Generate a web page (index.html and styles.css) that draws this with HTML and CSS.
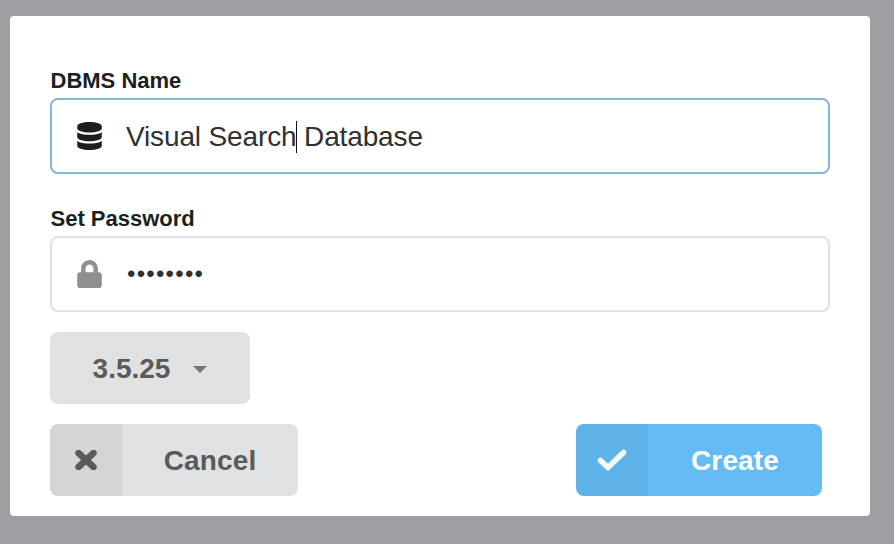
FILE: index.html
```html
<!DOCTYPE html>
<html lang="en">
<head>
<meta charset="utf-8">
<title>Create DBMS</title>
<link rel="stylesheet" href="styles.css">
</head>
<body>
<main class="card">
  <div class="field">
    <div class="label">DBMS Name</div>
    <div class="input input-focus">
      <svg class="field-icon icon-dark" viewBox="0 0 448 512" aria-hidden="true"><path d="M448 73v46c0 40-100 73-224 73S0 159 0 119V73C0 33 100 0 224 0s224 33 224 73zm0 113v93c0 40-100 73-224 73S0 319 0 279V186c48 33 136 49 224 49s176-16 224-49zm0 160v93c0 40-100 73-224 73S0 479 0 439V346c48 33 136 49 224 49s176-16 224-49z"/></svg>
      <span class="value">Visual Search<span class="caret"></span> Database</span>
    </div>
  </div>
  <div class="field">
    <div class="label">Set Password</div>
    <div class="input">
      <svg class="field-icon icon-grey" viewBox="0 0 448 512" aria-hidden="true"><path d="M400 224h-24v-72C376 68 308 0 224 0S72 68 72 152v72H48c-26.500 0-48 21.500-48 48v192c0 26.500 21.500 48 48 48h352c26.500 0 48-21.500 48-48V272c0-26.500-21.500-48-48-48zm-104 0H152v-72c0-39.700 32.300-72 72-72s72 32.300 72 72v72z"/></svg>
      <span class="dots">••••••••</span>
    </div>
  </div>
  <button class="btn select" type="button"><span class="select-text">3.5.25</span><span class="arrow"></span></button>
  <div class="actions">
    <button class="btn labeled" type="button">
      <span class="btn-icon"><svg class="svg-x" viewBox="0 0 22 20" aria-hidden="true"><path d="M3.500 3 L18.500 17 M18.500 3 L3.500 17"/></svg></span>
      <span class="btn-text">Cancel</span>
    </button>
    <button class="btn labeled primary" type="button">
      <span class="btn-icon"><svg class="svg-check" viewBox="0 0 30 22" aria-hidden="true"><path d="M3.500 11.500 L11 18.500 L26.500 3.500"/></svg></span>
      <span class="btn-text">Create</span>
    </button>
  </div>
</main>
</body>
</html>
```

FILE: styles.css
```css
* { box-sizing: border-box; }
html, body { margin: 0; height: 100%; }
body {
  background: #9e9fa2;
  padding: 16px 24px 28px 10px;
  font-family: "Liberation Sans", Arial, sans-serif;
  overflow: hidden;
}
.card {
  width: 860px;
  height: 500px;
  background: #fff;
  border-radius: 4px;
  padding: 52px 40px 20px;
}
.field { margin-bottom: 32px; }
.field + .field { margin-bottom: 20px; }
.label {
  font-size: 22px;
  font-weight: 700;
  line-height: 24px;
  padding-top: 1px;
  padding-bottom: 5px;
  padding-left: 0.5px;
  height: 30px;
  color: #1b1f23;
}
.input {
  height: 76px;
  display: flex;
  align-items: center;
  border: 2px solid #e0e1e2;
  border-radius: 8px;
  padding-left: 25px;
  background: #fff;
}
.input-focus { border-color: #85b7d9; }
.field-icon { width: 25px; height: 28px; flex: none; }
.icon-dark { fill: #1e1e1e; }
.icon-grey { fill: #8f8f8f; }
.value {
  margin-left: 24px;
  padding-top: 2px;
  font-size: 28px;
  line-height: 36px;
  letter-spacing: -0.14px;
  color: #303030;
}
.caret {
  display: inline-block;
  width: 0;
  height: 32px;
  border-left: 1px solid #111;
  vertical-align: -7px;
  margin-right: -1px;
}
.dots {
  margin-left: 25px;
  font-size: 24px;
  line-height: 36px;
  color: #303030;
  letter-spacing: 1.25px;
}
.btn {
  border: 0;
  padding: 0;
  height: 72px;
  border-radius: 8px;
  background: #e0e1e2;
  color: #5a5a5a;
  font-family: inherit;
  font-size: 28px;
  font-weight: 700;
  display: flex;
  align-items: center;
  overflow: hidden;
}
.select {
  width: 200px;
  justify-content: center;
}
.select-text { padding-top: 2px; }
.arrow {
  margin-left: 23px;
  margin-top: 2px;
  border-style: solid;
  border-width: 7px 7px 0;
  border-color: #757575 transparent transparent;
}
.actions {
  margin-top: 20px;
  display: flex;
  justify-content: space-between;
  padding-right: 8px;
}
.labeled { width: 248px; }
.labeled.primary {
  width: 246px;
  background: #65bcf4;
  color: #fff;
}
.btn-icon {
  width: 72px;
  height: 72px;
  flex: none;
  display: flex;
  align-items: center;
  justify-content: center;
  background: rgba(0, 0, 0, 0.05);
}
.btn-text {
  flex: 1;
  text-align: center;
  padding-top: 2px;
  letter-spacing: 0.15px;
}
.svg-x {
  width: 22px;
  height: 20px;
  fill: none;
  stroke: #5a5a5a;
  stroke-width: 6.500;
  stroke-linecap: round;
}
.svg-check {
  width: 30px;
  height: 22px;
  fill: none;
  stroke: #f2f9fe;
  stroke-width: 5.500;
  stroke-linecap: round;
  stroke-linejoin: miter;
}
```
